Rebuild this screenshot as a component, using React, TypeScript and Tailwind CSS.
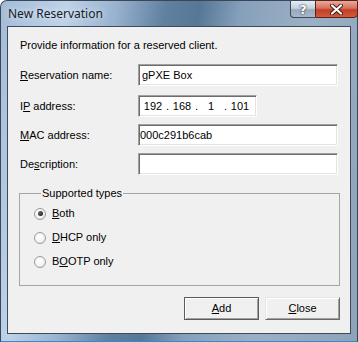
const Radio = ({ checked, children }: { checked?: boolean; children: React.ReactNode }) => (
  <div className="flex items-center h-[13px]">
    <span className="w-[12px] h-[12px] rounded-full border border-[#9a9a9a] bg-[radial-gradient(circle_at_40%_35%,#ffffff_0%,#f4f4f4_55%,#dcdcdc_100%)] flex items-center justify-center">
      {checked && <span className="w-[5px] h-[5px] rounded-full bg-[radial-gradient(circle_at_35%_35%,#6a6a6a,#0a0a0a)]" />}
    </span>
    <span className="ml-[6px]">{children}</span>
  </div>
);

const inputCls =
  "h-[22px] bg-white border border-t-[#a0a0a0] border-l-[#a0a0a0] border-b-white border-r-white shadow-[inset_1px_1px_0_#6d6d6d,inset_-1px_-1px_0_#e3e3e3] flex items-center";

const Row = ({ label, className, children }: { label: React.ReactNode; className: string; children: React.ReactNode }) => (
  <div className={`flex items-center h-[22px] ${className}`}>
    <div className="w-[119px] pl-[1px]">{label}</div>
    {children}
  </div>
);

export default function App() {
  return (
    <div className="w-[358px] h-[342px] flex flex-col rounded-t-[7px] border border-[#3a4757] border-b-[#2b8fd0] px-[6px] bg-[linear-gradient(100deg,#a3bcd8_0%,#bed2e8_16%,#98b2cf_28%,#5f809f_40%,#567796_48%,#86a0bb_58%,#9cb0c5_75%,#8ea2b8_100%)] font-['Liberation_Sans',Arial,sans-serif] text-[11px] leading-[13px] text-black">
      {/* title bar */}
      <div className="h-[25px] flex justify-between">
        <span className="pl-[1px] pt-[6px] text-[12px] leading-[14px] text-[#151d28] font-['Noto_Sans',sans-serif] [text-shadow:0_0_6px_rgba(255,255,255,0.9)]">
          New Reservation
        </span>
        <div className="flex h-[18px] -mt-[1px] -mr-[7px]">
          <div className="w-[25px] h-full rounded-bl-[4px] border border-[#3b4959] border-r-0 bg-[linear-gradient(180deg,#e6edf5_0%,#c4d1df_45%,#98a9bc_55%,#a8b8c9_100%)] flex items-center justify-center">
            <span className="text-white font-bold text-[13px] leading-none font-['DejaVu_Sans',sans-serif] [text-shadow:0_0_1px_#334,0_0_2px_#334]">?</span>
          </div>
          <div className="w-[43px] h-full rounded-br-[4px] border border-[#5a2218] bg-[linear-gradient(180deg,#e8aa9c_0%,#d7715e_45%,#c33f25_55%,#d35a3b_100%)] flex items-center justify-center">
            <svg width="13" height="11" viewBox="0 0 13 11">
              <path d="M2 1.5 L11 9.5 M11 1.5 L2 9.5" stroke="#3d1a12" strokeWidth="4" strokeLinecap="round" />
              <path d="M2 1.5 L11 9.5 M11 1.5 L2 9.5" stroke="#ffffff" strokeWidth="2.2" strokeLinecap="round" />
            </svg>
          </div>
        </div>
      </div>

      {/* client area */}
      <div className="h-[308px] border border-[#3f4b58] bg-[#f0f0f0] pl-[11px] pr-[10px] pt-[12px] flex flex-col">
        <p className="pl-[1px]">Provide information for a reserved client.</p>

        <Row className="mt-[12px]" label={<><u>R</u>eservation name:</>}>
          <div className={`${inputCls} w-[200px] pl-[3px]`}>gPXE Box</div>
        </Row>
        <Row className="mt-[9px]" label={<>I<u>P</u> address:</>}>
          <div className={`${inputCls} w-[119px] pl-[1px]`}>
            <span className="w-[26px] text-center">192</span>
            <span className="w-[3px] text-center">.</span>
            <span className="w-[26px] text-center">168</span>
            <span className="w-[3px] text-center">.</span>
            <span className="w-[26px] text-center">1</span>
            <span className="w-[3px] text-center">.</span>
            <span className="w-[26px] text-center">101</span>
          </div>
        </Row>
        <Row className="mt-[7px]" label={<><u>M</u>AC address:</>}>
          <div className={`${inputCls} w-[200px] pl-[1px]`}>000c291b6cab</div>
        </Row>
        <Row className="mt-[7px]" label={<>De<u>s</u>cription:</>}>
          <div className={`${inputCls} w-[200px]`} />
        </Row>

        <fieldset className="mt-[12px] w-[321px] border border-[#a5a5a5] pl-[14px] pt-[7px] pb-[17px] flex flex-col gap-[11px]">
          <legend className="ml-[7px] px-[1px]">Supported types</legend>
          <Radio checked><u>B</u>oth</Radio>
          <Radio><u>D</u>HCP only</Radio>
          <Radio>B<u>O</u>OTP only</Radio>
        </fieldset>

        <div className="mt-[11px] flex justify-end gap-[6px]">
          <button className="w-[75px] h-[23px] border border-[#5c5c5c] bg-[#f0f0f0] shadow-[inset_1px_1px_0_#ffffff,inset_-1px_-1px_0_#a0a0a0]">
            <u>A</u>dd
          </button>
          <button className="w-[75px] h-[23px] border border-t-[#e6e6e6] border-l-[#e6e6e6] border-b-[#6a6a6a] border-r-[#6a6a6a] bg-[#f0f0f0] shadow-[inset_1px_1px_0_#ffffff,inset_-1px_-1px_0_#a0a0a0]">
            <u>C</u>lose
          </button>
        </div>
      </div>
    </div>
  );
}
